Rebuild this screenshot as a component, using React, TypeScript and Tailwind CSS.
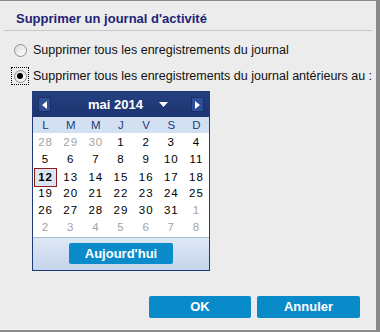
import React from 'react';

const weekDays = ['L', 'M', 'M', 'J', 'V', 'S', 'D'];

type Day = { n: number; other?: boolean };

const weeks: Day[][] = [
  [{ n: 28, other: true }, { n: 29, other: true }, { n: 30, other: true }, { n: 1 }, { n: 2 }, { n: 3 }, { n: 4 }],
  [{ n: 5 }, { n: 6 }, { n: 7 }, { n: 8 }, { n: 9 }, { n: 10 }, { n: 11 }],
  [{ n: 12 }, { n: 13 }, { n: 14 }, { n: 15 }, { n: 16 }, { n: 17 }, { n: 18 }],
  [{ n: 19 }, { n: 20 }, { n: 21 }, { n: 22 }, { n: 23 }, { n: 24 }, { n: 25 }],
  [{ n: 26 }, { n: 27 }, { n: 28 }, { n: 29 }, { n: 30 }, { n: 31 }, { n: 1, other: true }],
  [2, 3, 4, 5, 6, 7, 8].map(n => ({ n, other: true })),
];

const Radio: React.FC<{ checked?: boolean; label: string }> = ({ checked, label }) => (
  <label className="flex items-center h-[26px]">
    <span
      className={`flex items-center justify-center w-[16px] h-[16px] ml-[12px] ${
        checked ? 'outline outline-1 outline-dotted outline-black' : ''
      }`}
    >
      <span className="flex items-center justify-center w-[13px] h-[13px] rounded-full border border-[#8e8f8f] bg-gradient-to-br from-[#dcdcdc] to-white">
        {checked && <span className="w-[6px] h-[6px] rounded-full bg-black" />}
      </span>
    </span>
    <span className="ml-[5px] text-[12.5px] text-[#111]">{label}</span>
  </label>
);

const Calendar = () => (
  <div className="w-[178px] ml-[32px] mt-[2px] border border-[#1f3a78] bg-white">
    <div className="flex items-center h-[25px] px-[5px] bg-gradient-to-b from-[#25417f] to-[#1c3470]">
      <button className="flex items-center justify-center w-[13px] h-[15px] bg-[#2c4f98] border border-[#1a2f66]">
        <svg width="5" height="8" viewBox="0 0 5 8"><path d="M5 0 L0 4 L5 8 Z" fill="#fff" /></svg>
      </button>
      <div className="flex-1 flex items-center justify-center text-white font-bold text-[13px]">
        <span className="ml-[14px]">mai 2014</span>
        <svg className="ml-[16px]" width="9" height="5" viewBox="0 0 9 5"><path d="M0 0 H9 L4.5 5 Z" fill="#fff" /></svg>
      </div>
      <button className="flex items-center justify-center w-[13px] h-[15px] bg-[#2c4f98] border border-[#1a2f66]">
        <svg width="5" height="8" viewBox="0 0 5 8"><path d="M0 0 L5 4 L0 8 Z" fill="#fff" /></svg>
      </button>
    </div>
    <div className="grid grid-cols-7 h-[16px] items-center bg-[#d2e0f1] text-[11.5px] text-[#233c78]">
      {weekDays.map((d, i) => (
        <span key={i} className="text-center">{d}</span>
      ))}
    </div>
    <div className="pt-[1px] pb-[1px]">
      {weeks.map((week, wi) => (
        <div key={wi} className="grid grid-cols-7 h-[17px]">
          {week.map((d, di) => {
            const selected = wi === 2 && di === 0;
            return (
              <span
                key={di}
                className={`flex items-center justify-center text-[11.5px] tracking-[1px] ${
                  d.other ? 'text-[#a3a3a3]' : 'text-black'
                } ${selected ? 'mx-[1px] font-bold border border-[#8e1b1b] bg-[#dbe5f2]' : ''}`}
              >
                {d.n}
              </span>
            );
          })}
        </div>
      ))}
    </div>
    <div className="flex justify-center pt-[5px] h-[33px] border-t border-[#a5bedc] bg-gradient-to-b from-[#dee8f5] to-[#c5d5ec]">
      <button className="w-[104px] h-[21px] rounded-[2px] bg-[#0a8ccb] text-white font-bold text-[13px]">
        Aujourd'hui
      </button>
    </div>
  </div>
);

export default function App() {
  return (
    <div
      className="w-[380px] h-[332px] bg-[#8a8a8a] overflow-hidden"
      style={{ fontFamily: '"Liberation Sans", Arial, sans-serif' }}
    >
      <div className="w-[376px] h-[329px] mt-[1px] bg-[#ececec] border-b border-[#f6f6f6] flex flex-col">
        <div className="pl-[16px] pt-[8px] h-[29px] text-[13px] font-bold text-[#1f2478]">
          Supprimer un journal d'activité
        </div>
        <div className="mx-[4px] h-px bg-[#c9c9c9]" />
        <div className="mt-[6px]">
          <Radio label="Supprimer tous les enregistrements du journal" />
          <Radio checked label="Supprimer tous les enregistrements du journal antérieurs au :" />
        </div>
        <Calendar />
        <div className="flex justify-end gap-[6px] mt-auto mb-[11px] mr-[16px]">
          <button className="w-[102px] h-[22px] rounded-[2px] bg-[#0a8bc9] text-white font-bold text-[13px]">OK</button>
          <button className="w-[103px] h-[22px] rounded-[2px] bg-[#0a8bc9] text-white font-bold text-[13px]">Annuler</button>
        </div>
      </div>
    </div>
  );
}
